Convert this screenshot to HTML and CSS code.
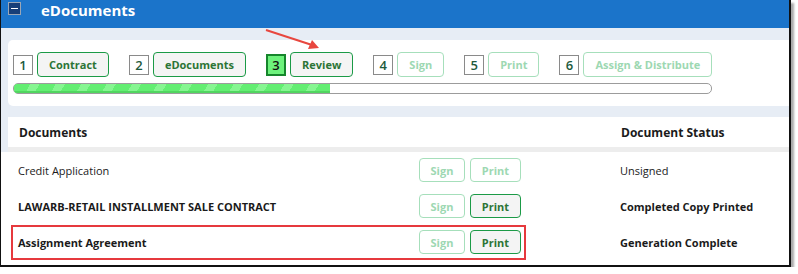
FILE: index.html
```html
<!doctype html>
<html lang="en">
	<head>
		<title>eDocuments</title>
		<meta charset="utf-8" />
		<link rel="stylesheet" href="styles.css">
	</head>

	<body>
		<div class="frame">
			<div class="titlebar">
				<span class="collapse"></span>
				<span class="title">eDocuments</span>
			</div>

			<div class="workspace">
				<div class="steps-card">
					<div class="steps">
						<div class="step"><span class="num">1</span><span class="btn">Contract</span></div>
						<div class="step"><span class="num">2</span><span class="btn">eDocuments</span></div>
						<div class="step"><span class="num current">3</span><span class="btn">Review</span></div>
						<div class="step"><span class="num">4</span><span class="btn off">Sign</span></div>
						<div class="step"><span class="num">5</span><span class="btn off">Print</span></div>
						<div class="step"><span class="num">6</span><span class="btn off">Assign &amp; Distribute</span></div>
					</div>
					<div class="progress"><div class="fill" style="width: 316px;"></div></div>
				</div>

				<div class="docs-head">
					<span>Documents</span>
					<span></span>
					<span>Document Status</span>
				</div>

				<div class="docs">
					<div class="doc">
						<span class="name plain">Credit Application</span>
						<span class="actions"><span class="btn small sign off">Sign</span><span class="btn small print off">Print</span></span>
						<span class="status plain">Unsigned</span>
					</div>
					<div class="doc">
						<span class="name">LAWARB-RETAIL INSTALLMENT SALE CONTRACT</span>
						<span class="actions"><span class="btn small sign off">Sign</span><span class="btn small print">Print</span></span>
						<span class="status">Completed Copy Printed</span>
					</div>
					<div class="doc marked">
						<span class="name">Assignment Agreement</span>
						<span class="actions"><span class="btn small sign off">Sign</span><span class="btn small print">Print</span></span>
						<span class="status">Generation Complete</span>
						<span class="highlight"></span>
					</div>
				</div>
			</div>

			<!-- callout arrow pointing at the Review step -->
			<svg class="arrow" width="60" height="24" viewBox="0 0 60 24">
				<line x1="1" y1="1" x2="47" y2="16" stroke="#e8473f" stroke-width="2" />
				<polygon points="54,19 43,20 47,11" fill="#e8473f" />
			</svg>
		</div>
	</body>
</html>
```

FILE: styles.css
```css
body {
	margin: 0;
	background: #fff;
	font-family: "Open Sans", "Liberation Sans", sans-serif;
	color: #1b1b1b;
}

.frame {
	position: relative;
	width: 788px;
	height: 265px;
	border-left: 1px solid #111;
	border-right: 2px solid #111;
	border-bottom: 2px solid #111;
	box-shadow: 3px 3px 2px #aaa;
	overflow: hidden;
}

.titlebar {
	height: 28px;
	background: #1b74ca;
	display: flex;
	align-items: flex-start;
}

.collapse {
	position: relative;
	width: 11px;
	height: 11px;
	margin: 2px 0 0 7px;
	background: #173f78;
	border: 1px solid #9aa6b6;
}

.collapse::after {
	content: "";
	position: absolute;
	left: 2px;
	top: 5px;
	width: 7px;
	height: 1px;
	background: #fff;
}

.title {
	margin: 0 0 0 20px;
	color: #fff;
	font-weight: bold;
	font-size: 15px;
	line-height: 20px;
}

.workspace {
	background: #e7edf5;
	padding-top: 12px;
}

.steps-card {
	margin-left: 7px;
	background: #fff;
	border-radius: 5px 0 0 5px;
	padding: 12px 0 11px 5px;
	height: 43px;
}

.steps {
	display: flex;
	gap: 20px;
	height: 25px;
}

.step {
	display: flex;
	align-items: center;
	gap: 4px;
}

.num {
	box-sizing: border-box;
	width: 20px;
	height: 20px;
	border: 1px solid #8a8a8a;
	display: flex;
	align-items: center;
	justify-content: center;
	font-size: 13px;
	font-weight: 600;
	color: #1d5a3c;
}

.num.current {
	height: 22px;
	margin-top: 1px;
	border: 2px solid #16852c;
	background: #6df27c;
	color: #111;
}

.btn {
	box-sizing: border-box;
	height: 25px;
	padding: 0 11px;
	border: 1px solid #1b9a46;
	border-radius: 4px;
	background: #f4f4f4;
	display: flex;
	align-items: center;
	justify-content: center;
	font-size: 11px;
	font-weight: bold;
	color: #2c7436;
}

.btn.off {
	background: #fff;
	border-color: #a6dfbb;
	color: #9dd8b2;
}

.progress {
	box-sizing: border-box;
	width: 699px;
	height: 11px;
	margin-top: 6px;
	border: 1px solid #9c9c9c;
	border-radius: 5px;
	overflow: hidden;
}

.fill {
	height: 100%;
	background-color: #63ee72;
	background-image: repeating-linear-gradient(-60deg, #63ee72 0 14px, #86f691 14px 22px);
	box-shadow: inset 0 -2px 0 #51d660;
}

.docs-head {
	display: grid;
	grid-template-columns: 401px 201px 1fr;
	margin: 11px 0 0 7px;
	padding-left: 11px;
	height: 30px;
	align-items: center;
	background: #fff;
	border-bottom: 5px solid #ededed;
	font-size: 12px;
	font-weight: bold;
}

.docs {
	background: #fff;
	height: 78px;
}

.doc {
	position: relative;
	display: grid;
	grid-template-columns: 401px 201px 1fr;
	padding-left: 17px;
	height: 36px;
	align-items: center;
	font-size: 11px;
	font-weight: bold;
}

.plain {
	font-weight: normal;
}

.actions {
	display: flex;
	gap: 5px;
}

.btn.small {
	height: 24px;
	padding: 0;
}

.btn.sign {
	width: 46px;
}

.btn.print {
	width: 51px;
}

.highlight {
	position: absolute;
	left: 10px;
	top: 1px;
	width: 511px;
	height: 31px;
	border: 2px solid #e6393d;
}

.arrow {
	position: absolute;
	left: 264px;
	top: 29px;
}
```
